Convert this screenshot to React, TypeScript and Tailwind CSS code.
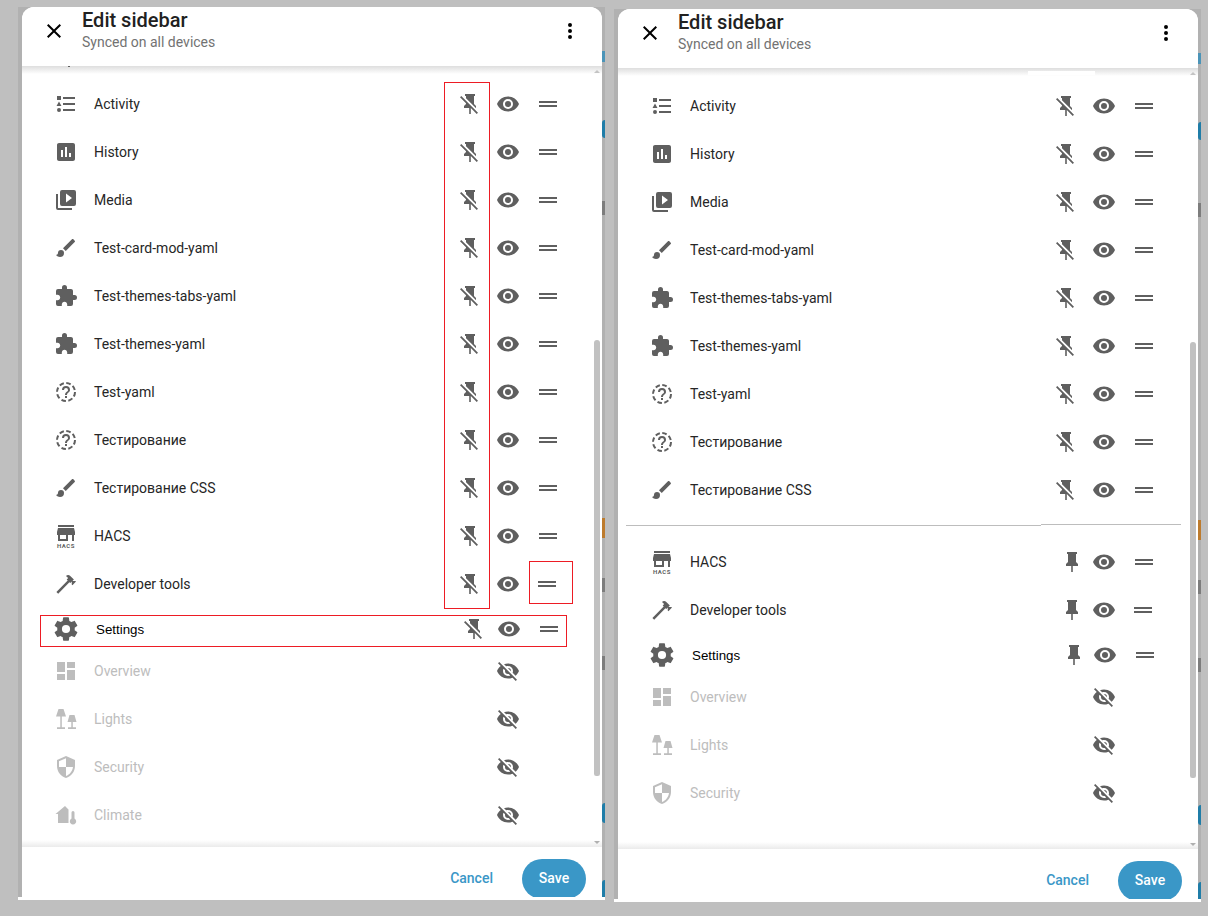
const mdi = {
  close: "M19,6.41L17.59,5L12,10.59L6.41,5L5,6.41L10.59,12L5,17.59L6.41,19L12,13.41L17.59,19L19,17.59L13.41,12L19,6.41Z",
  dots: "M12,16A2,2 0 0,1 14,18A2,2 0 0,1 12,20A2,2 0 0,1 10,18A2,2 0 0,1 12,16M12,10A2,2 0 0,1 14,12A2,2 0 0,1 12,14A2,2 0 0,1 10,12A2,2 0 0,1 12,10M12,4A2,2 0 0,1 14,6A2,2 0 0,1 12,8A2,2 0 0,1 10,6A2,2 0 0,1 12,4Z",
  eye: "M12,9A3,3 0 0,0 9,12A3,3 0 0,0 12,15A3,3 0 0,0 15,12A3,3 0 0,0 12,9M12,17A5,5 0 0,1 7,12A5,5 0 0,1 12,7A5,5 0 0,1 17,12A5,5 0 0,1 12,17M12,4.5C7,4.5 2.73,7.61 1,12C2.73,16.39 7,19.5 12,19.5C17,19.5 21.27,16.39 23,12C21.27,7.61 17,4.5 12,4.5Z",
  eyeOff: "M11.83,9L15,12.16C15,12.11 15,12.05 15,12A3,3 0 0,0 12,9C11.94,9 11.89,9 11.83,9M7.53,9.8L9.08,11.35C9.03,11.56 9,11.77 9,12A3,3 0 0,0 12,15C12.22,15 12.44,14.97 12.65,14.92L14.2,16.47C13.53,16.8 12.79,17 12,17A5,5 0 0,1 7,12C7,11.21 7.2,10.47 7.53,9.8M2,4.27L4.28,6.55L4.73,7C3.08,8.3 1.78,10 1,12C2.73,16.39 7,19.5 12,19.5C13.55,19.5 15.03,19.2 16.38,18.66L16.81,19.08L19.73,22L21,20.73L3.27,3M12,7A5,5 0 0,1 17,12C17,12.64 16.87,13.26 16.64,13.82L19.57,16.75C21.07,15.5 22.27,13.86 23,12C21.27,7.61 17,4.5 12,4.5C10.6,4.5 9.26,4.75 8,5.2L10.17,7.35C10.74,7.13 11.35,7 12,7Z",
  pin: "M16,12V4H17V2H7V4H8V12L6,14V16H11.2V22H12.8V16H18V14L16,12Z",
  pinOff: "M2,5.27L3.28,4L20,20.72L18.73,22L12.8,16.07V22H11.2V16H6V14L8,12V11.27L2,5.27M16,12L18,14V16H17.82L8,6.18V4H7V2H17V4H16V12Z",
  drag: "M21,11H3V9H21V11M21,13H3V15H21V13Z",
  list: "M5,9.5L7.5,14H2.5L5,9.5M3,4H7V8H3V4M5,20A2,2 0 0,0 7,18A2,2 0 0,0 5,16A2,2 0 0,0 3,18A2,2 0 0,0 5,20M9,5V7H21V5H9M9,19H21V17H9V19M9,13H21V11H9V13Z",
  chart: "M19 3H5C3.9 3 3 3.9 3 5V19C3 20.1 3.9 21 5 21H19C20.1 21 21 20.1 21 19V5C21 3.9 20.1 3 19 3M9 17H7V10H9V17M13 17H11V7H13V17M17 17H15V13H17V17Z",
  media: "M4,6H2V20A2,2 0 0,0 4,22H18V20H4V6M20,2H8A2,2 0 0,0 6,4V16A2,2 0 0,0 8,18H20A2,2 0 0,0 22,16V4A2,2 0 0,0 20,2M12,14.5V5.5L18,10L12,14.5Z",
  brush: "M20.71,4.63L19.37,3.29C19,2.9 18.35,2.9 17.96,3.29L9,12.25L11.75,15L20.71,6.04C21.1,5.65 21.1,5 20.71,4.63M7,14A3,3 0 0,0 4,17C4,18.31 2.84,19 2,19C2.92,20.22 4.5,21 6,21A4,4 0 0,0 10,17A3,3 0 0,0 7,14Z",
  puzzle: "M20.5,11H19V7C19,5.89 18.1,5 17,5H13V3.5A2.5,2.5 0 0,0 10.5,1A2.5,2.5 0 0,0 8,3.5V5H4A2,2 0 0,0 2,7V10.8H3.5C5,10.8 6.2,12 6.2,13.5C6.2,15 5,16.2 3.5,16.2H2V20A2,2 0 0,0 4,22H7.8V20.5C7.8,19 9,17.8 10.5,17.8C12,17.8 13.2,19 13.2,20.5V22H17A2,2 0 0,0 19,20V16H20.5A2.5,2.5 0 0,0 23,13.5A2.5,2.5 0 0,0 20.5,11Z",
  hammer: "M2.4 20L13.7 8.5L12.72 7.5L14.14 6.07L12 3.89C13.2 2.7 15.09 2.7 16.27 3.89L19.87 7.5L18.45 8.91H21.29L22 9.62L18.45 13.21L17.74 12.5V9.62L16.27 11.04L15.4 10.2L4.2 21.8Z",
  cog: "M12,15.5A3.5,3.5 0 0,1 8.5,12A3.5,3.5 0 0,1 12,8.5A3.5,3.5 0 0,1 15.5,12A3.5,3.5 0 0,1 12,15.5M19.43,12.97C19.47,12.65 19.5,12.33 19.5,12C19.5,11.67 19.47,11.34 19.43,11L21.54,9.37C21.73,9.22 21.78,8.95 21.66,8.73L19.66,5.27C19.54,5.05 19.27,4.96 19.05,5.05L16.56,6.05C16.04,5.66 15.5,5.32 14.87,5.07L14.5,2.42C14.46,2.18 14.25,2 14,2H10C9.75,2 9.54,2.18 9.5,2.42L9.13,5.07C8.5,5.32 7.96,5.66 7.44,6.05L4.95,5.05C4.73,4.96 4.46,5.05 4.34,5.27L2.34,8.73C2.21,8.95 2.27,9.22 2.46,9.37L4.57,11C4.53,11.34 4.5,11.67 4.5,12C4.5,12.33 4.53,12.65 4.57,12.97L2.46,14.63C2.27,14.78 2.21,15.05 2.34,15.27L4.34,18.73C4.46,18.95 4.73,19.03 4.95,18.95L7.44,17.94C7.96,18.34 8.5,18.68 9.13,18.93L9.5,21.58C9.54,21.82 9.75,22 10,22H14C14.25,22 14.46,21.82 14.5,21.58L14.87,18.93C15.5,18.67 16.04,18.34 16.56,17.94L19.05,18.95C19.27,19.03 19.54,18.95 19.66,18.73L21.66,15.27C21.78,15.05 21.73,14.78 21.54,14.63L19.43,12.97Z",
  dashboard: "M13,3V9H21V3M13,21H21V11H13M3,21H11V15H3M3,13H11V3H3V13Z",
  shield: "M12,12H19C18.47,16.11 15.72,19.78 12,20.92V12H5V6.3L12,3.19M12,1L3,5V11C3,16.55 6.84,21.73 12,23C17.16,21.73 21,16.55 21,11V5L12,1Z",
  lamps: "M4.5 2h5L12 9.5H2zM6.3 9.5h1.5v10.8H11V22H3v-1.7h3.3zM15.5 8h5l2 7h-9zM17.3 15h1.5v5.3H22V22h-8v-1.7h3.3z",
  climate: "M11 3L1.5 11H4v9h10.5V6.5zM17.5 9.5a1.5 1.5 0 0 1 3 0v6a3.2 3.2 0 1 1-3 0z",
  question: "M11,18H13V16H11V18M12,6A4,4 0 0,0 8,10H10A2,2 0 0,1 12,8A2,2 0 0,1 14,10C14,12 11,11.75 11,15H13C13,12.75 16,12.5 16,10A4,4 0 0,0 12,6Z",
  store: "M12,15H6V11H12M21,11V8L20,4H4L3,8V11H4V17H14V11H18V17H20V11M20,1H4V3H20V1Z",
};

function Icon({ d, className = "" }: { d: string; className?: string }) {
  return (
    <svg viewBox="0 0 24 24" className={`w-6 h-6 shrink-0 fill-current ${className}`}>
      <path d={d} />
    </svg>
  );
}

function DashedHelp() {
  return (
    <svg viewBox="0 0 24 24" className="w-6 h-6 shrink-0 fill-current">
      <circle cx="12" cy="12" r="9" fill="none" stroke="currentColor" strokeWidth="2" strokeDasharray="4.6 2.47" />
      <path d={mdi.question} />
    </svg>
  );
}

function HacsIcon() {
  return (
    <svg viewBox="0 0 24 24" className="w-6 h-6 shrink-0 fill-current">
      <path d={mdi.store} />
      <text x="12" y="23.5" textAnchor="middle" fontSize="6" fontWeight="700" letterSpacing="0.5" fontFamily="Roboto, sans-serif">
        HACS
      </text>
    </svg>
  );
}

type RowProps = {
  icon: React.ReactNode;
  label: string;
  pin?: "off" | "on";
  pinClass?: string;
  dragClass?: string;
};

function Row({ icon, label, pin = "off", pinClass = "", dragClass = "" }: RowProps) {
  return (
    <div className="flex items-center h-12 pl-8">
      <span className="text-[#5f5f5f]">{icon}</span>
      <span className="ml-4 w-[364px] text-sm text-[#262626]">{label}</span>
      <Icon d={pin === "on" ? mdi.pin : mdi.pinOff} className={`text-[#5f5f5f] ${pinClass}`} />
      <Icon d={mdi.eye} className="ml-[14px] text-[#5f5f5f]" />
      <Icon d={mdi.drag} className={`ml-4 text-[#5f5f5f] ${dragClass}`} />
    </div>
  );
}

function SettingsRow({ pin, pinClass }: { pin: string; pinClass: string }) {
  return (
    <div className="flex items-center h-[39px] pt-[3px] pl-[30px]">
      <Icon d={mdi.cog} className="w-[28px] h-[28px] text-[#5f5f5f]" />
      <span className="ml-4 w-[362px] pt-px text-[13.33px] text-black font-['Liberation_Sans',sans-serif]">Settings</span>
      <Icon d={pin} className={`text-[#5f5f5f] ${pinClass}`} />
      <Icon d={mdi.eye} className="ml-[15px] text-[#5f5f5f]" />
      <Icon d={mdi.drag} className="ml-4 text-[#5f5f5f]" />
    </div>
  );
}

function HiddenRow({ icon, label }: { icon: React.ReactNode; label: string }) {
  return (
    <div className="flex items-center h-12 pl-8">
      <span className="text-[#bdbdbd]">{icon}</span>
      <span className="ml-4 w-[402px] text-sm text-[#bdbdbd]">{label}</span>
      <Icon d={mdi.eyeOff} className="text-[#5f5f5f]" />
    </div>
  );
}

const mainRows: { icon: React.ReactNode; label: string }[] = [
  { icon: <Icon d={mdi.list} />, label: "Activity" },
  { icon: <Icon d={mdi.chart} />, label: "History" },
  { icon: <Icon d={mdi.media} />, label: "Media" },
  { icon: <Icon d={mdi.brush} />, label: "Test-card-mod-yaml" },
  { icon: <Icon d={mdi.puzzle} />, label: "Test-themes-tabs-yaml" },
  { icon: <Icon d={mdi.puzzle} />, label: "Test-themes-yaml" },
  { icon: <DashedHelp />, label: "Test-yaml" },
  { icon: <DashedHelp />, label: "Тестирование" },
  { icon: <Icon d={mdi.brush} />, label: "Тестирование CSS" },
];

const hiddenIcons: Record<string, string> = {
  Overview: mdi.dashboard,
  Lights: mdi.lamps,
  Security: mdi.shield,
  Climate: mdi.climate,
};

function Sliver({ className }: { className: string }) {
  return <div className={`absolute right-0 w-[3px] ${className}`} />;
}

function Panel({ wrapClass, hidden, children, extras }: { wrapClass: string; hidden: string[]; children: React.ReactNode; extras?: React.ReactNode }) {
  return (
    <div className={`relative w-[587px] h-[893px] flex flex-col bg-[#b1b1b1] ${wrapClass}`}>
      <div className="relative ml-1 mr-[3px] h-[890px] flex flex-col bg-white rounded-t-xl overflow-hidden">
        {/* header */}
        <div className="flex items-start h-[59px] shrink-0 bg-white">
          <Icon d={mdi.close} className="mt-3 ml-5 text-black" />
          <div className="ml-4 flex-1">
            <div className="text-xl leading-[26px] font-medium text-[#212121]">Edit sidebar</div>
            <div className="text-sm leading-[18px] text-[#727272]">Synced on all devices</div>
          </div>
          <Icon d={mdi.dots} className="mt-3 mr-5 text-black" />
        </div>

        {/* list */}
        <div className="relative h-[781px] shrink-0 overflow-hidden pt-[14px]">
          <div className="absolute inset-x-0 top-0 h-2 bg-gradient-to-b from-[#dedede] to-white" />
          {children}
          {hidden.map((name) => (
            <HiddenRow key={name} icon={<Icon d={hiddenIcons[name]} />} label={name} />
          ))}
          <div className="absolute inset-x-0 bottom-0 h-[7px] bg-gradient-to-b from-white to-[#ebebeb]" />
          {/* scrollbar */}
          <svg viewBox="0 0 6 3" className="absolute left-[572px] top-[4px] w-1.5 h-[3px] fill-[#c4c4c4]">
            <path d="M3 0L6 3H0Z" />
          </svg>
          <div className="absolute left-[572px] top-[274px] w-1.5 h-[436px] rounded-t-sm rounded-b-[3px] bg-[#c1c1c1]" />
          <svg viewBox="0 0 6 3" className="absolute left-[572px] bottom-[3px] w-1.5 h-[3px] fill-[#b0b0b0]">
            <path d="M0 0H6L3 3Z" />
          </svg>
        </div>

        {/* footer */}
        <div className="flex flex-1 items-start justify-end pr-4 pt-3 bg-white">
          <button className="h-10 mr-[29px] pb-0.5 text-sm font-medium text-[#3a97c7]">Cancel</button>
          <button className="h-10 w-16 pb-0.5 rounded-full bg-[#3a97c7] text-sm font-medium text-white">Save</button>
        </div>
        {extras}
      </div>
      <div className="h-[3px] bg-white" />

      {/* bits of the page behind the dialog */}
      <Sliver className="top-[44px] h-[11px] w-[2px] bg-[#4b94b8]" />
      <Sliver className="top-[113px] h-[18px] rounded-l-sm bg-[#1f7da8]" />
      <Sliver className="top-[194px] h-[14px] bg-[#7d7d7d]" />
      <Sliver className="top-[511px] h-[20px] bg-[#bd7b2d]" />
      <Sliver className="top-[571px] h-[14px] bg-[#7d7d7d]" />
      <Sliver className="top-[649px] h-[14px] bg-[#7d7d7d]" />
      <Sliver className="top-[796px] h-[20px] rounded-l-sm bg-[#1f7da8]" />
      <Sliver className="top-[873px] h-[17px] rounded-tl-sm bg-[#1f7da8]" />
    </div>
  );
}

export default function App() {
  return (
    <div className="flex w-[1208px] h-[916px] overflow-hidden bg-[#bfbfbf] font-['Roboto',sans-serif]">
      <Panel
        wrapClass="ml-[18px] mt-[7px]"
        hidden={["Overview", "Lights", "Security", "Climate"]}
        extras={
          <>
            <div className="absolute left-[422px] top-[75px] w-[46px] h-[527px] border border-[#ed1c24]" />
            <div className="absolute left-[507px] top-[554px] w-[44px] h-[43px] border border-[#ed1c24]" />
            <div className="absolute left-[18px] top-[608px] w-[527px] h-[32px] border border-[#ed1c24]" />
            <div className="absolute left-[46px] top-[59px] w-[2px] h-px bg-[#5f5f5f]" />
          </>
        }
      >
        {mainRows.map((r) => (
          <Row key={r.label} icon={r.icon} label={r.label} />
        ))}
        <Row icon={<HacsIcon />} label="HACS" />
        <Row icon={<Icon d={mdi.hammer} />} label="Developer tools" dragClass="-translate-x-px" />
        <SettingsRow pin={mdi.pinOff} pinClass="translate-x-1" />
      </Panel>

      <Panel
        wrapClass="ml-[9px] mt-[9px]"
        hidden={["Overview", "Lights", "Security"]}
        extras={<div className="absolute left-[410px] top-[62px] w-[67px] h-1 bg-white" />}
      >
        {mainRows.map((r) => (
          <Row key={r.label} icon={r.icon} label={r.label} />
        ))}
        <div className="flex items-start h-6 pl-2 pr-[17px]">
          <div className="w-[415px] h-px mt-[11px] bg-[#bdbdbd]" />
          <div className="flex-1 h-px mt-[10px] bg-[#bdbdbd]" />
        </div>
        <Row icon={<HacsIcon />} label="HACS" pin="on" pinClass="translate-x-1.5" />
        <Row icon={<Icon d={mdi.hammer} />} label="Developer tools" pin="on" pinClass="translate-x-1.5" dragClass="-translate-x-px" />
        <SettingsRow pin={mdi.pin} pinClass="translate-x-2" />
      </Panel>
    </div>
  );
}
